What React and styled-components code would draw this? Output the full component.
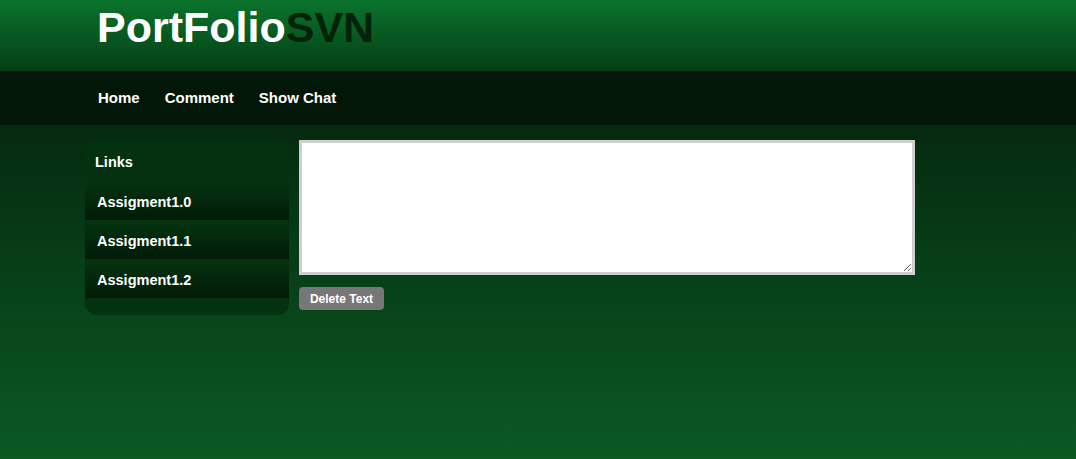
import React from "react";
import styled, { createGlobalStyle } from "styled-components";

const Global = createGlobalStyle`
  html, body { margin: 0; padding: 0; }
  body {
    font-family: "Liberation Sans", Arial, sans-serif;
    background: #0a5a22;
  }
`;

const Page = styled.div`
  min-height: 100vh;
  background: linear-gradient(to bottom, #052a10 0px, #052a10 125px, #0a5a22 100%);
  display: flex;
  flex-direction: column;
`;

const Header = styled.header`
  height: 71px;
  background: linear-gradient(to bottom, #0b742c 0%, #053e15 100%);
  padding-left: 97px;
  box-sizing: border-box;
`;

const Title = styled.h1`
  margin: 0;
  font-size: 43px;
  font-weight: bold;
  line-height: 55px;
  color: #ffffff;
`;

const Accent = styled.span`
  color: #03220a;
`;

const Nav = styled.nav`
  height: 54px;
  background: #031709;
  display: flex;
  align-items: center;
  padding-left: 98px;
  padding-bottom: 2px;
  box-sizing: border-box;
  gap: 25px;
`;

const NavLink = styled.a`
  color: #ffffff;
  font-weight: bold;
  font-size: 15px;
  text-decoration: none;
  line-height: 17px;
`;

const Main = styled.main`
  display: flex;
  align-items: flex-start;
  gap: 10px;
  padding: 15px 0 0 85px;
`;

const Sidebar = styled.aside`
  width: 204px;
  background: #04310f;
  border-radius: 12px;
  padding-bottom: 17px;
  display: flex;
  flex-direction: column;
`;

const SideTitle = styled.div`
  height: 41px;
  display: flex;
  align-items: center;
  padding-left: 10px;
  padding-top: 2px;
  box-sizing: border-box;
  color: #ffffff;
  font-weight: bold;
  font-size: 14.5px;
`;

const SideItem = styled.a`
  height: 39px;
  display: flex;
  align-items: center;
  padding-left: 12px;
  padding-top: 2px;
  box-sizing: border-box;
  color: #ffffff;
  font-weight: bold;
  font-size: 14.5px;
  text-decoration: none;
  background: linear-gradient(to bottom, #04340f 0%, #021b08 100%);
`;

const Editor = styled.div`
  display: flex;
  flex-direction: column;
  align-items: flex-start;
  gap: 12px;
`;

const TextArea = styled.textarea`
  width: 616px;
  height: 135px;
  box-sizing: border-box;
  border: 3px solid #cfcfcf;
  background: #ffffff;
  margin: 0;
  padding: 2px;
  outline: none;
  font-family: "Liberation Mono", monospace;
`;

const Button = styled.button`
  width: 85px;
  height: 23px;
  border: none;
  border-radius: 4px;
  background: #777777;
  color: #ffffff;
  font-family: "Liberation Sans", Arial, sans-serif;
  font-weight: bold;
  font-size: 12px;
  padding: 0;
  cursor: pointer;
`;

export default function App() {
  const links = ["Assigment1.0", "Assigment1.1", "Assigment1.2"];
  return (
    <>
      <Global />
      <Page>
        <Header>
          <Title>
            PortFolio<Accent>SVN</Accent>
          </Title>
        </Header>
        <Nav>
          <NavLink href="#">Home</NavLink>
          <NavLink href="#">Comment</NavLink>
          <NavLink href="#">Show Chat</NavLink>
        </Nav>
        <Main>
          <Sidebar>
            <SideTitle>Links</SideTitle>
            {links.map((l) => (
              <SideItem key={l} href="#">
                {l}
              </SideItem>
            ))}
          </Sidebar>
          <Editor>
            <TextArea />
            <Button>Delete Text</Button>
          </Editor>
        </Main>
      </Page>
    </>
  );
}
